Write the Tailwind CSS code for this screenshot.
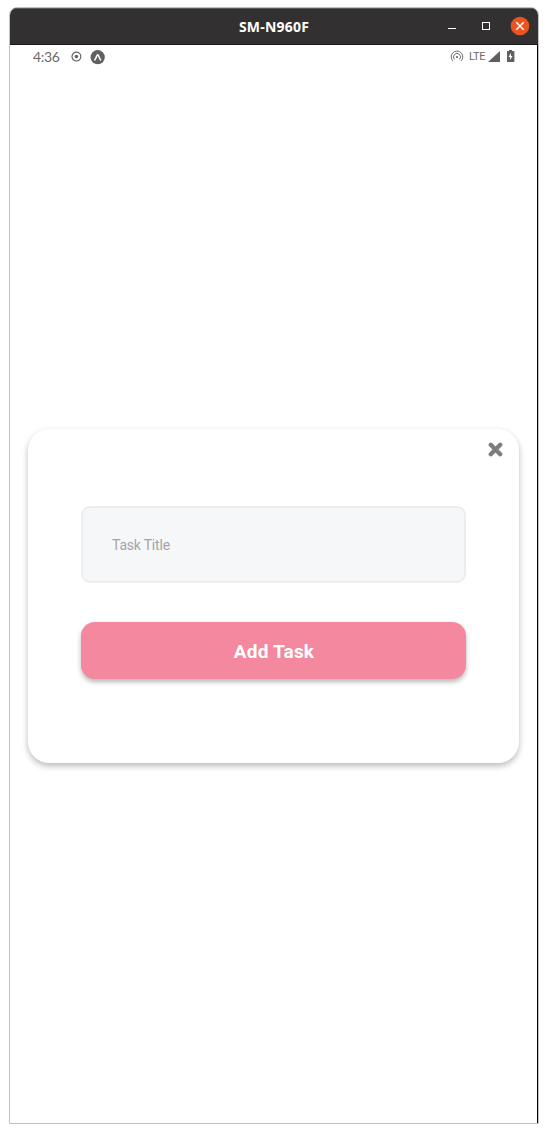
<!DOCTYPE html>
<html lang="en">
<head>
<meta charset="utf-8">
<title>SM-N960F</title>
<script src="https://cdn.jsdelivr.net/npm/@tailwindcss/browser@4"></script>
</head>
<body class="bg-white w-[548px] h-[1133px] overflow-hidden pt-[7px] pl-[9px]">
<div class="w-[530px] h-[1117px] flex flex-col rounded-t-[8px] border border-[#c1bfbf] overflow-hidden">
  <header class="h-[37px] shrink-0 bg-[#333031] border-t border-t-[#5b5959] border-b border-b-[#1b1919] grid grid-cols-[92px_1fr_92px] items-center">
    <h1 class="col-start-2 text-center text-white text-[14px] leading-5 tracking-[0.2px] font-bold whitespace-nowrap font-['Noto_Sans','Open_Sans',sans-serif]">SM-N960F</h1>
    <svg class="w-[92px] h-[35px]" viewBox="0 0 92 35" fill="none">
      <path d="M2 19.5H10" stroke="#fff"/>
      <rect x="36.5" y="13.5" width="7" height="7" stroke="#fff"/>
      <circle cx="74" cy="17" r="9.3" fill="#e95420"/>
      <path d="M70.3 13.3L77.7 20.7M77.7 13.3L70.3 20.7" stroke="#fff" stroke-width="1.5"/>
    </svg>
  </header>
  <main class="flex-1 flex flex-col bg-white border-r border-black">
    <div class="h-[24px] shrink-0 flex items-center pl-[23px] pr-[22px] text-[#696969]">
      <span class="w-[38px] text-[14px] leading-6 tracking-[-0.35px] font-['Lato',sans-serif]">4:36</span>
      <svg class="-ml-px w-3 h-3" viewBox="0 0 12 12" fill="none"><circle cx="6.4" cy="5.6" r="4.4" stroke="#666" stroke-width="1.2"/><circle cx="6.4" cy="5.6" r="1.8" fill="#666"/></svg>
      <svg class="ml-[8px] w-[15px] h-[15px]" viewBox="0 0 15 15"><circle cx="7.7" cy="7.2" r="7.1" fill="#606060"/><path d="M4.8 9.8C6.1 8.7 6.4 5.3 7.7 4.7C9 5.3 9.3 8.7 10.6 9.8" stroke="#fff" stroke-width="1.6" stroke-linecap="round" fill="none"/></svg>
      <svg class="ml-auto w-[14px] h-[14px]" viewBox="0 0 14 14" fill="none" stroke="#707070" stroke-width="1"><path d="M3.1 11.1A5.8 5.8 0 1 1 10.9 11.1M4.5 9.4A3.5 3.5 0 1 1 9.5 9.4"/><circle cx="7" cy="7" r="1.1" fill="#666" stroke="none"/></svg>
      <span class="ml-[5px] w-[18px] text-[11px] leading-[22px] tracking-[-0.4px] font-['Roboto',sans-serif]">LTE</span>
      <svg class="ml-[1px] mb-[2px] w-[12px] h-[11px]" viewBox="0 0 12 11"><path d="M0 11L12 0V11Z" fill="#5e5e5e"/></svg>
      <svg class="ml-[7px] mb-[2px] w-[8px] h-[12px]" viewBox="0 0 8 12"><path d="M2 0H5V1H6.7Q7.4 1 7.4 2V11Q7.4 12 6.7 12H.4Q-.3 12 -.3 11V2Q-.3 1 .4 1H2Z" fill="#606060"/><path d="M4 3L1.5 7H3.1V10L5.5 6H4Z" fill="#fff"/></svg>
    </div>
    <section class="relative mt-[360px] ml-[18px] w-[491px] h-[334px] shrink-0 rounded-[21px] bg-white shadow-[0_3px_6px_rgba(0,0,0,0.27)] px-[53px] pt-[77px]">
      <button class="absolute right-[16px] top-[13px] w-[15px] h-[15px]" aria-label="Close">
        <svg viewBox="0 0 15 15" class="w-[15px] h-[15px]"><path d="M2.8 2.8L12.2 12.2M12.2 2.8L2.8 12.2" stroke="#7d7d7d" stroke-width="4.4" stroke-linecap="round"/></svg>
      </button>
      <div class="w-[385px] h-[77px] rounded-[9px] border-2 border-[#eceeee] bg-[#f6f7f9] flex items-center pl-[29px] pt-px text-[14px] leading-5 tracking-[-0.2px] text-[#a4a5a6] font-['Roboto',sans-serif]">Task Title</div>
      <button class="mt-[39px] w-[385px] h-[57px] rounded-[14px] bg-[#f3889f] shadow-[0_3px_5px_rgba(0,0,0,0.28)] flex items-center justify-center pt-[3px] pl-px text-[19px] leading-6 tracking-[0.2px] font-bold text-white font-['Roboto',sans-serif]">Add Task</button>
    </section>
  </main>
</div>
</body>
</html>
